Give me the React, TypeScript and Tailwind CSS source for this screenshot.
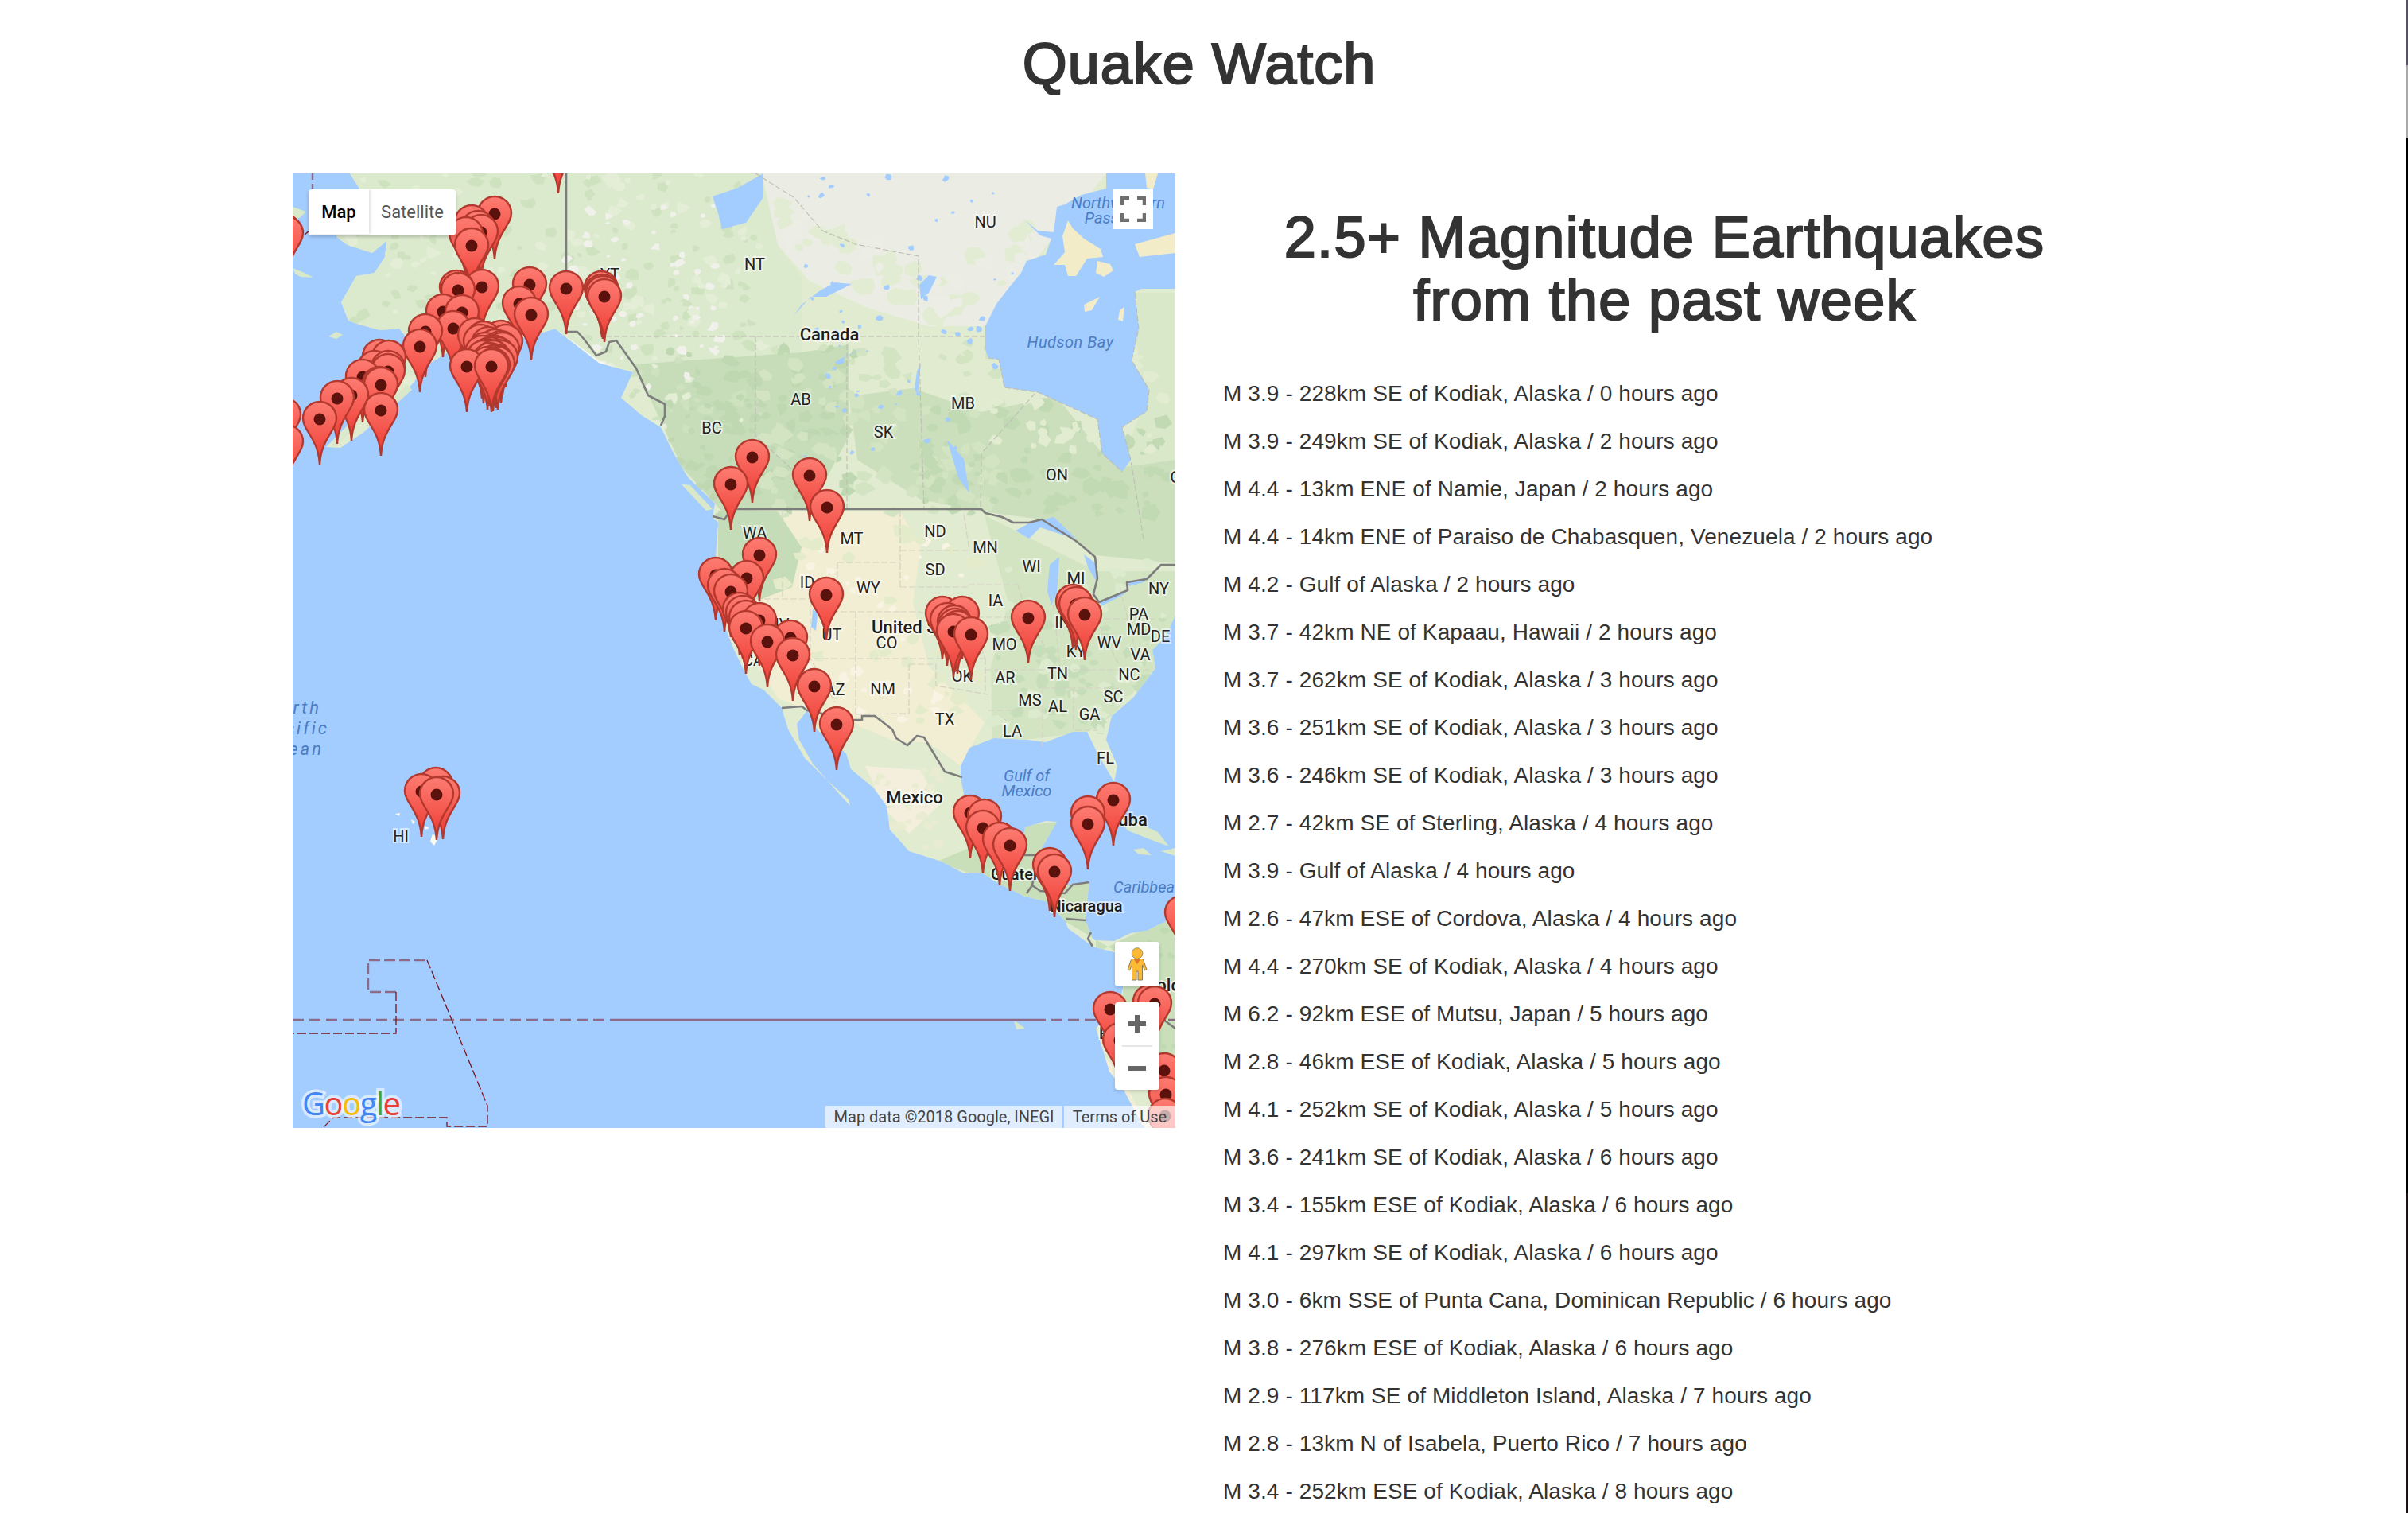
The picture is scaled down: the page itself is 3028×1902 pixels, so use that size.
import React from 'react';

const quakes = [
  'M 3.9 - 228km SE of Kodiak, Alaska / 0 hours ago',
  'M 3.9 - 249km SE of Kodiak, Alaska / 2 hours ago',
  'M 4.4 - 13km ENE of Namie, Japan / 2 hours ago',
  'M 4.4 - 14km ENE of Paraiso de Chabasquen, Venezuela / 2 hours ago',
  'M 4.2 - Gulf of Alaska / 2 hours ago',
  'M 3.7 - 42km NE of Kapaau, Hawaii / 2 hours ago',
  'M 3.7 - 262km SE of Kodiak, Alaska / 3 hours ago',
  'M 3.6 - 251km SE of Kodiak, Alaska / 3 hours ago',
  'M 3.6 - 246km SE of Kodiak, Alaska / 3 hours ago',
  'M 2.7 - 42km SE of Sterling, Alaska / 4 hours ago',
  'M 3.9 - Gulf of Alaska / 4 hours ago',
  'M 2.6 - 47km ESE of Cordova, Alaska / 4 hours ago',
  'M 4.4 - 270km SE of Kodiak, Alaska / 4 hours ago',
  'M 6.2 - 92km ESE of Mutsu, Japan / 5 hours ago',
  'M 2.8 - 46km ESE of Kodiak, Alaska / 5 hours ago',
  'M 4.1 - 252km SE of Kodiak, Alaska / 5 hours ago',
  'M 3.6 - 241km SE of Kodiak, Alaska / 6 hours ago',
  'M 3.4 - 155km ESE of Kodiak, Alaska / 6 hours ago',
  'M 4.1 - 297km SE of Kodiak, Alaska / 6 hours ago',
  'M 3.0 - 6km SSE of Punta Cana, Dominican Republic / 6 hours ago',
  'M 3.8 - 276km ESE of Kodiak, Alaska / 6 hours ago',
  'M 2.9 - 117km SE of Middleton Island, Alaska / 7 hours ago',
  'M 2.8 - 13km N of Isabela, Puerto Rico / 7 hours ago',
  'M 3.4 - 252km ESE of Kodiak, Alaska / 8 hours ago',
];

// dot centres of the markers, in map pixels
const pins: number[][] = [
  [334, -32], [254, 51], [225, 62], [233, 69], [237, 74], [218, 77], [225, 91],
  [238, 143], [206, 144], [208, 147], [298, 140], [285, 164], [300, 178], [344, 145],
  [388, 145], [389, 149], [390, 151], [392, 155], [189, 174], [213, 175], [202, 195],
  [167, 199], [160, 218], [229, 204], [240, 208], [262, 207], [268, 212], [236, 212],
  [246, 215], [254, 218], [262, 220], [264, 222], [242, 222], [250, 225], [258, 228],
  [258, 231], [262, 232], [240, 232], [248, 235], [256, 237], [256, 238], [258, 240],
  [245, 240], [252, 242], [238, 226], [244, 230], [252, 232], [248, 228], [254, 226],
  [219, 243], [250, 243], [121, 232], [109, 231], [103, 245],
  [120, 245], [120, 249], [88, 256], [109, 265], [111, 266], [74, 279], [56, 283],
  [34, 309], [111, 298], [-8, 76], [-10, 74], [-11, 304], [-8, 338],
  [551, 391], [578, 357], [650, 380], [672, 420], [532, 505], [543, 519], [551, 526],
  [571, 509], [587, 480], [562, 549], [566, 553], [570, 559], [570, 572], [597, 589],
  [587, 562], [629, 606], [626, 584], [656, 645], [684, 693], [671, 530],
  [817, 554], [842, 554], [823, 562], [832, 565], [833, 569], [836, 572], [831, 576], [853, 580],
  [925, 559], [981, 539], [985, 542], [996, 555], [1032, 788], [1000, 805], [1000, 818],
  [852, 804], [870, 809], [868, 823], [889, 838], [902, 845], [952, 870], [958, 878],
  [1028, 1051], [1078, 1042], [1084, 1044], [1040, 1090], [1118, 930],
  [1096, 1128], [1098, 1158], [1097, 1185],
  [180, 769], [162, 777], [189, 780], [181, 781],
].sort((a, b) => a[1] - b[1]);

const land =
  '72,0 84,19 70,50 55,80 69,90 100,100 118,85 116,105 103,125 80,129 61,162 70,185 84,190 110,197 134,195 150,215 120,250 110,270 84,302 42,344 60,345 90,325 125,290 150,265 170,240 195,225 215,215 240,215 300,205 330,195 345,207 385,238 428,250 413,282 440,305 463,319 478,350 497,382 531,415 528,432 535,439 532,482 535,520 543,569 555,599 566,622 577,642 592,649 615,672 623,699 644,735 668,759 699,787 701,795 689,782 654,742 637,712 634,692 647,675 660,700 696,729 702,749 730,772 747,795 751,825 775,852 816,865 844,880 868,880 892,895 921,909 947,915 971,939 975,949 1006,972 1033,979 1047,985 1045,1020 1040,1040 1010,1075 1022,1112 1027,1129 1045,1152 1068,1195 1072,1200 1110,1200 1110,935 1088,945 1074,952 1054,955 1033,965 1009,964 1006,962 997,939 999,915 1002,890 971,895 950,880 935,860 961,815 947,814 921,822 918,849 905,850 880,830 860,810 845,785 840,760 840,745 851,722 882,710 923,712 947,715 981,702 999,702 1012,729 1033,765 1037,745 1023,712 1030,682 1057,659 1085,622 1081,599 1098,582 1110,555 1110,0';

const hudson =
  '1023,0 1023,19 992,27 971,39 961,42 957,74 937,72 921,59 940,78 954,82 947,102 923,110 916,125 902,142 885,164 871,192 871,222 875,232 888,234 895,269 937,275 1012,309 1018,352 1043,375 1054,360 1043,319 1074,299 1077,272 1055,235 1064,195 1059,149 1067,145 1110,145 1110,0';

const zones = [
  ['#dbe9cd', '70,0 590,0 610,90 640,130 640,330 500,380 430,250 300,200 130,260 50,350 40,100'],
  ['#c7ddba', '430,240 640,225 700,215 700,330 650,422 540,425 490,370'],
  ['#cbdfbd', '700,280 780,270 866,300 960,280 1018,352 1110,360 1110,490 1010,480 942,435 866,425 790,410 710,360'],
  ['#d8e8c9', '1055,150 1110,150 1110,360 1040,370 1070,290'],
  ['#f2eed3', '620,425 764,425 790,470 780,540 800,620 870,690 840,745 800,715 760,715 700,690 650,675 610,660 575,600 590,540'],
  ['#c5dcb8', '535,424 610,425 640,470 628,520 590,535 535,520'],
  ['#d2e4c2', '870,430 1010,500 1110,500 1110,555 1085,622 1030,682 1000,702 920,712 880,710 878,620 900,540'],
  ['#f3efdc', '720,745 790,750 812,795 775,830 745,800'],
  ['#c8dfba', '810,865 918,820 965,815 1010,900 1010,980 1110,930 1110,1180 1040,1090 1047,985 971,940 880,890'],
  ['#f3efd6', '1015,1105 1040,1130 1075,1200 1050,1200 1018,1125'],
];

const tundra = '590,0 1023,0 960,75 871,192 800,192 720,168 650,135 610,90';

const lakes = [
  '909,449 926,440 942,436 957,432 985,459 961,452 940,445 926,459',
  '952,492 964,482 961,529 954,542 949,525',
  '995,479 1012,492 1012,515 1000,495',
  '1014,539 1050,524 1044,530 1018,543',
  '1049,514 1074,508 1070,514 1052,519',
  '823,335 844,359 851,402 837,382',
  '685,235 720,219 696,229 690,240',
  '630,179 651,155 671,155 703,139 682,137 662,148 640,165',
  '528,29 560,18 592,0 592,30 570,62 540,70 535,50',
  '788,140 800,128 810,130 800,150 790,158',
  '785,249 790,238 786,280 782,270',
  '654,548 660,552 658,575 652,570',
];

const arcticIslands = [
  '975,59 981,69 995,82 1016,95 1019,105 999,107 985,129 975,129 971,115 957,115 971,99 968,79',
  '1012,110 1028,114 1032,122 1020,130 1010,125',
  '995,165 1015,155 1005,172 996,174',
  '1040,172 1046,168 1044,186 1038,184',
  '1059,89 1110,75 1110,100 1065,105',
  '1072,0 1088,0 1082,20 1074,18',
];

const otherLand = [
  '0,42 17,48 10,55 0,60',
  '0,119 15,125 26,131 10,130 3,126',
  '45,205 55,199 63,203 55,208',
  '145,265 150,272 128,292 122,288',
  '488,390 500,392 528,422 520,424',
  '1030,800 1060,815 1088,828 1102,846 1080,838 1050,826',
  '1057,850 1070,848 1080,857 1064,856',
  '1092,852 1110,848 1110,858',
  '907,1065 915,1070 921,1075 910,1076',
  '129,805 135,804 134,808',
  '149,812 154,815 151,818',
  '166,820 172,823 167,825',
  '176,830 183,836 178,845 173,840',
];

const seeded = (seed: number) => {
  let s = seed;
  return () => {
    s = (s * 16807) % 2147483647;
    return s / 2147483647;
  };
};

const blotch = (r: () => number, cx: number, cy: number, size: number) => {
  const pts: string[] = [];
  const n = 5 + Math.floor(r() * 3);
  for (let i = 0; i < n; i++) {
    const a = (i / n) * Math.PI * 2;
    const d = size * (0.45 + r() * 0.7);
    pts.push(`${(cx + Math.cos(a) * d).toFixed(1)},${(cy + Math.sin(a) * d * 0.8).toFixed(1)}`);
  }
  return pts.join(' ');
};

const blotchAreas: [string, number, number, number, number, number, number][] = [
  ['#cfe2c0', 70, 0, 520, 320, 170, 8],
  ['#e4eed6', 70, 0, 520, 320, 130, 8],
  ['#f0f1ea', 340, 40, 200, 230, 60, 6],
  ['#bfd8b2', 470, 220, 240, 210, 110, 8],
  ['#d2e4c2', 590, 210, 300, 220, 100, 10],
  ['#c2dab4', 780, 290, 320, 140, 80, 10],
  ['#e1ecd0', 880, 230, 230, 120, 40, 9],
  ['#f7f4e4', 640, 450, 220, 240, 40, 8],
  ['#e4ebcb', 600, 430, 260, 260, 40, 10],
  ['#c6ddb9', 880, 560, 220, 140, 70, 8],
  ['#dcebcd', 880, 480, 220, 220, 40, 8],
  ['#e9ecd0', 700, 740, 120, 120, 40, 8],
  ['#bfd9b1', 960, 850, 150, 330, 50, 8],
];

const MapTexture = () => {
  const r = seeded(4711);
  const shapes: React.ReactNode[] = [];
  blotchAreas.forEach(([color, x, y, w, h, count, size], a) => {
    for (let i = 0; i < count; i++) {
      shapes.push(
        <polygon
          key={`${a}-${i}`}
          points={blotch(r, x + r() * w, y + r() * h, size * (0.5 + r()))}
          fill={color}
        />
      );
    }
  });
  return <>{shapes}</>;
};

// breaks up the tundra edge and drops small lakes on it
const TundraEdge = () => {
  const r = seeded(2203);
  const shapes: React.ReactNode[] = [];
  for (let i = 0; i < 70; i++) {
    const t = r();
    const x = 610 + t * 320;
    const y = 60 + (1 - Math.abs(t - 0.6) * 1.4) * 130 - r() * 60;
    shapes.push(
      <polygon key={`e${i}`} points={blotch(r, x, y, 6 + r() * 14)} fill={r() > 0.4 ? '#e2ecd3' : '#ecede5'} />
    );
  }
  for (let i = 0; i < 60; i++) {
    shapes.push(
      <polygon key={`p${i}`} points={blotch(r, 640 + r() * 270, 5 + r() * 360, 2 + r() * 4)} fill="#a3ccff" />
    );
  }
  return <>{shapes}</>;
};

const states: [string, number, number][] = [
  ['YT', 399, 127], ['NT', 581, 114], ['BC', 527, 320], ['NU', 871, 61], ['AB', 639, 284],
  ['SK', 743, 325], ['MB', 843, 289], ['ON', 961, 379], ['QC', 1117, 382], ['MT', 703, 459],
  ['ND', 808, 450], ['MN', 871, 470], ['WI', 929, 494], ['MI', 985, 509], ['SD', 808, 498],
  ['WY', 724, 521], ['ID', 647, 514], ['IA', 884, 537], ['NY', 1089, 522], ['PA', 1064, 554],
  ['MD', 1064, 573], ['DE', 1091, 582], ['IN', 968, 564], ['UT', 678, 580], ['CO', 747, 590],
  ['MO', 895, 592], ['KY', 985, 601], ['WV', 1027, 590], ['VA', 1066, 605], ['OK', 842, 632],
  ['AR', 896, 634], ['TN', 962, 629], ['NC', 1052, 630], ['NM', 742, 648], ['AZ', 682, 649],
  ['MS', 927, 662], ['SC', 1032, 658], ['AL', 962, 670], ['GA', 1002, 680], ['TX', 820, 686],
  ['LA', 905, 701], ['FL', 1022, 735], ['NV', 611, 567], ['CA', 579, 612], ['WA', 581, 452],
  ['HI', 136, 833],
];

const countries: [string, number, number, 'start' | 'middle', number][] = [
  ['Canada', 675, 210, 'middle', 22],
  ['United States', 728, 578, 'start', 22],
  ['Mexico', 782, 792, 'middle', 22],
  ['Cuba', 1024, 820, 'start', 22],
  ['Guatemala', 878, 888, 'start', 20],
  ['Nicaragua', 998, 928, 'middle', 20],
  ['Colombia', 1072, 1028, 'start', 22],
  ['Ecuador', 1014, 1088, 'start', 20],
];

const seaLabels: [string, number, number, 'start' | 'middle' | 'end', number, number][] = [
  ['Hudson Bay', 978, 219, 'middle', 20, 0.5],
  ['Gulf of', 923, 764, 'middle', 20, 0],
  ['Mexico', 923, 783, 'middle', 20, 0],
  ['Northwestern', 1038, 44, 'middle', 20, 0],
  ['Passages', 1038, 63, 'middle', 20, 0],
  ['Caribbean', 1032, 904, 'start', 20, 0],
  ['North', 36, 679, 'end', 22, 3],
  ['Pacific', 46, 705, 'end', 22, 3],
  ['Ocean', 39, 731, 'end', 22, 3],
];

const Marker = ({ x, y }: { x: number; y: number }) => (
  <g transform={`translate(${x} ${y})`}>
    <path
      d="M0,57 C-1,40 -6,30 -12,20 C-17,12 -21,6 -21,-1 A21,21 0 1 1 21,-1 C21,6 17,12 12,20 C6,30 1,40 0,57 Z"
      fill="url(#pinFill)"
      stroke="#b3392f"
      strokeWidth="2.4"
    />
    <circle cx="0" cy="0" r="7.5" fill="#5c120c" />
  </g>
);

const MapControls = () => (
  <>
    <div className="absolute left-[20px] top-[20px] flex h-[58px] w-[185px] overflow-hidden rounded-[4px] bg-white pb-[2px] text-[22px] shadow-[0_2px_4px_rgba(0,0,0,0.2)] font-['Roboto',sans-serif]">
      <div className="flex w-[76px] items-center justify-center font-medium text-black shadow-[2px_0_3px_rgba(0,0,0,0.12)]">
        Map
      </div>
      <div className="flex flex-1 items-center justify-center text-[#565656]">Satellite</div>
    </div>
    <div className="absolute left-[1032px] top-[20px] flex h-[50px] w-[50px] items-center justify-center bg-white">
      <svg width="32" height="32" viewBox="0 0 32 32" fill="none" stroke="#6f6f6f" strokeWidth="4.5">
        <path d="M2,11 V2 H11 M21,2 H30 V11 M30,21 V30 H21 M11,30 H2 V21" />
      </svg>
    </div>
    <div className="absolute left-[1034px] top-[966px] flex h-[56px] w-[56px] items-center justify-center rounded-[4px] bg-white shadow-[0_2px_4px_rgba(0,0,0,0.15)]">
      <svg width="26" height="42" viewBox="0 0 26 42">
        <circle cx="13" cy="7.5" r="6.8" fill="#fbb934" stroke="#8a7a50" strokeWidth="0.8" />
        <path
          d="M7,14.5 H19 C20.5,15 21,16 21.5,18 L25,28 L22.5,29 L19.5,22 V41 H14 V30 H12 V41 H6.5 V22 L3.5,29 L1,28 L4.5,18 C5,16 5.5,15 7,14.5 Z"
          fill="#fbb934"
          stroke="#7c6f55"
          strokeWidth="0.9"
        />
        <path d="M9,15 H17 L13,21 Z" fill="#e0752a" />
      </svg>
    </div>
    <div className="absolute left-[1034px] top-[1042px] flex h-[110px] w-[56px] flex-col items-center rounded-[4px] bg-white shadow-[0_2px_4px_rgba(0,0,0,0.15)]">
      <div className="flex h-[54px] items-center justify-center">
        <svg width="22" height="22" viewBox="0 0 22 22" fill="#666666">
          <path d="M8,0 H14 V8 H22 V14 H14 V22 H8 V14 H0 V8 H8 Z" />
        </svg>
      </div>
      <div className="h-[2px] w-[38px] bg-[#e6e6e6]" />
      <div className="flex h-[54px] items-center justify-center">
        <div className="h-[6px] w-[22px] bg-[#666666]" />
      </div>
    </div>
    <div className="absolute left-[670px] top-[1172px] flex h-[28px] w-[298px] items-center justify-center bg-white/65 text-[20px] text-[#444444] font-['Roboto',sans-serif]">
      Map data ©2018 Google, INEGI
    </div>
    <div className="absolute left-[970px] top-[1172px] flex h-[28px] w-[140px] items-center justify-center bg-white/65 text-[20px] text-[#444444] font-['Roboto',sans-serif]">
      Terms of Use
    </div>
  </>
);

const QuakeMap = () => (
  <div className="relative h-[1200px] w-[1110px] shrink-0 overflow-hidden bg-[#a3ccff]">
    <svg className="absolute inset-0" width="1110" height="1200" viewBox="0 0 1110 1200">
      <defs>
        <linearGradient id="pinFill" x1="0" y1="0" x2="0" y2="1">
          <stop offset="0" stopColor="#fd7c72" />
          <stop offset="0.6" stopColor="#f4544b" />
          <stop offset="1" stopColor="#e8392f" />
        </linearGradient>
        <clipPath id="landClip">
          <polygon points={land} />
        </clipPath>
      </defs>

      <polygon points={land} fill="#e1ebcf" />
      <g clipPath="url(#landClip)">
        {zones.map(([color, pts], i) => (
          <polygon key={i} points={pts} fill={color} />
        ))}
        <MapTexture />
        <polygon points={tundra} fill="#ecede5" opacity="0.9" />
        <TundraEdge />
        <polyline
          points="312,203 345,209 385,238 420,252"
          fill="none"
          stroke="#f8faf6"
          strokeWidth="5"
          opacity="0.75"
        />
      </g>
      {lakes.map((pts, i) => (
        <polygon key={i} points={pts} fill="#a3ccff" />
      ))}
      <polygon points={hudson} fill="#a3ccff" />
      {arcticIslands.map((pts, i) => (
        <polygon key={i} points={pts} fill="#f3ecc9" />
      ))}
      {otherLand.map((pts, i) => (
        <polygon key={i} points={pts} fill={i < 9 ? '#d8e8c8' : '#fbf8ef'} />
      ))}

      {/* province and state lines */}
      <g fill="none" stroke="#bdbdb2" strokeWidth="1.1" strokeDasharray="7 3">
        <path d="M394,205 H870" />
        <path d="M666,72 L708,89 L787,104 V205 L794,422" />
        <path d="M582,0 L630,30 L666,72" />
        <path d="M697,205 V422 M582,205 V330 L628,372 L652,422" />
        <path d="M933,277 L866,352 L865,422" />
        <path d="M875,232 L888,234 L895,269 L937,275 L1012,309 L1018,352 L1043,375" />
        <path d="M1059,149 L1064,195 L1055,235 L1077,272 L1074,299 L1043,319 L1054,360 L1070,460" />
      </g>
      <g fill="none" stroke="#d4d0c0" strokeWidth="1.2" strokeDasharray="8 3">
        <path d="M764,424 V522 M764,474 H851 M844,429 L851,474 M764,520 H851" />
        <path d="M685,489 H764 M685,489 V551 H764 M764,551 H789 V552 H847 L871,610" />
        <path d="M708,551 V680 M651,537 V610 H871 M775,617 V679 L708,680" />
        <path d="M775,617 H809 V644 L875,655 M871,610 V655" />
        <path d="M871,624 H1080 M875,675 H915 M943,647 H1040 M943,647 V720 M982,647 V700 H1012" />
        <path d="M850,517 H912 M850,558 H912 M912,517 L925,560 L955,610 M955,530 L965,620" />
        <path d="M616,425 V535 M582,535 H651 M590,540 L651,610 L682,665" />
        <path d="M1010,560 H1085 M1010,560 L1040,620 M1040,520 L1060,600" />
      </g>

      {/* international borders */}
      <g fill="none" stroke="#7d7d7d" strokeWidth="2.6" strokeLinejoin="round">
        <path d="M344,0 V199 H358 L367,209 L382,229 L394,224 L398,212 L407,210 L432,245 L447,279 L468,290 V305 L463,317" />
        <path d="M528,431 L543,435 L547,429 L555,422 H866 L871,427 L892,432 L906,439 L926,439 L942,435 L985,462 L1009,482 L1012,509 L1007,529 L1014,539 L1050,524 L1049,514 L1074,510 L1092,492 H1110" />
        <path d="M615,672 L640,670 L647,675 L706,687 L716,687 L716,682 L732,682 L754,699 L759,710 L773,719 L785,707 L794,709 L820,752 L842,759" />
        <path d="M918,857 H937 L930,895 L923,905 M930,895 L940,902 L971,905 L981,894 L1002,891" />
        <path d="M973,937 L997,939 M1004,954 L1000,962 L1006,972 M1090,1060 L1110,1075" />
      </g>

      {/* maritime boundaries */}
      <g fill="none" stroke="#8c6a88" strokeWidth="2.4">
        <path d="M0,1064 H413" strokeDasharray="14 7" />
        <path d="M413,1064 H933" />
        <path d="M933,1064 H1110" strokeDasharray="14 7" />
        <path d="M130,1029 H95 V989 H169" strokeDasharray="14 5" />
        <path d="M25,0 V20" strokeDasharray="8 5" />
      </g>
      <g fill="none" stroke="#7c1220" strokeWidth="1.3" strokeDasharray="11 4">
        <path d="M130,1029 V1081 H0" />
        <path d="M169,989 L245,1172 V1198 H194 V1187 H51 L38,1200" />
        <path d="M15,77 L21,72" />
      </g>

      {/* place names sit under the markers */}
      <g
        fontFamily="Roboto, sans-serif"
        fontSize="20"
        fill="#222222"
        stroke="#ffffff"
        strokeOpacity="0.55"
        strokeWidth="4"
        paintOrder="stroke"
        textAnchor="middle"
      >
        {states.map(([name, x, y]) => (
          <text key={name} x={x} y={y + 7}>
            {name}
          </text>
        ))}
        {countries.map(([name, x, y, anchor, size]) => (
          <text key={name} x={x} y={y} textAnchor={anchor} fontSize={size} fontWeight="500" fill="#1c1c1c">
            {name}
          </text>
        ))}
      </g>
      <g fontFamily="Roboto, sans-serif" fontStyle="italic" fill="#4a7dc4">
        {seaLabels.map(([name, x, y, anchor, size, spacing]) => (
          <text key={name} x={x} y={y} textAnchor={anchor} fontSize={size} letterSpacing={spacing}>
            {name}
          </text>
        ))}
      </g>

      {pins.map(([x, y], i) => (
        <Marker key={i} x={x} y={y} />
      ))}

      <text
        x="12"
        y="1184"
        fontFamily="'Open Sans', sans-serif"
        fontSize="40"
        fontWeight="500"
        letterSpacing="-1.5"
        stroke="#ffffff"
        strokeOpacity="0.6"
        strokeWidth="7"
        paintOrder="stroke"
      >
        <tspan fill="#4285f4">G</tspan>
        <tspan fill="#ea4335">o</tspan>
        <tspan fill="#fbbc05">o</tspan>
        <tspan fill="#4285f4">g</tspan>
        <tspan fill="#34a853">l</tspan>
        <tspan fill="#ea4335">e</tspan>
      </text>
    </svg>
    <MapControls />
  </div>
);

const EdgeStrip = () => (
  <div className="absolute right-0 top-0 flex h-full w-[2px] flex-col">
    <div className="h-[82px] bg-[#5a5068]" />
    <div className="h-[91px] bg-[#a8a8a8]" />
    <div className="h-[1327px] bg-black" />
    <div className="flex-1 bg-[#1d1014]" />
  </div>
);

export default function App() {
  return (
    <div className="relative h-[1902px] w-[3028px] overflow-hidden bg-white text-[#333333] font-['Liberation_Sans',Arial,sans-serif]">
      <div className="ml-[368px] w-[2280px]">
        <h1 className="pt-[41px] pb-[98px] text-center text-[72px] leading-[79px] tracking-[1px] [-webkit-text-stroke:2.2px_#333333]">
          Quake Watch
        </h1>
        <div className="flex gap-[60px]">
          <QuakeMap />
          <div className="w-[1110px] pt-[41px]">
            <h2 className="text-center text-[72px] leading-[79px] tracking-[1.3px] [-webkit-text-stroke:2.2px_#333333]">
              2.5+ Magnitude Earthquakes
              <br />
              from the past week
            </h2>
            <div className="mt-[58px] flex flex-col gap-[20px]">
              {quakes.map((quake) => (
                <p key={quake} className="text-[28px] leading-[40px] tracking-[0.1px]">
                  {quake}
                </p>
              ))}
            </div>
          </div>
        </div>
      </div>
      <EdgeStrip />
    </div>
  );
}
